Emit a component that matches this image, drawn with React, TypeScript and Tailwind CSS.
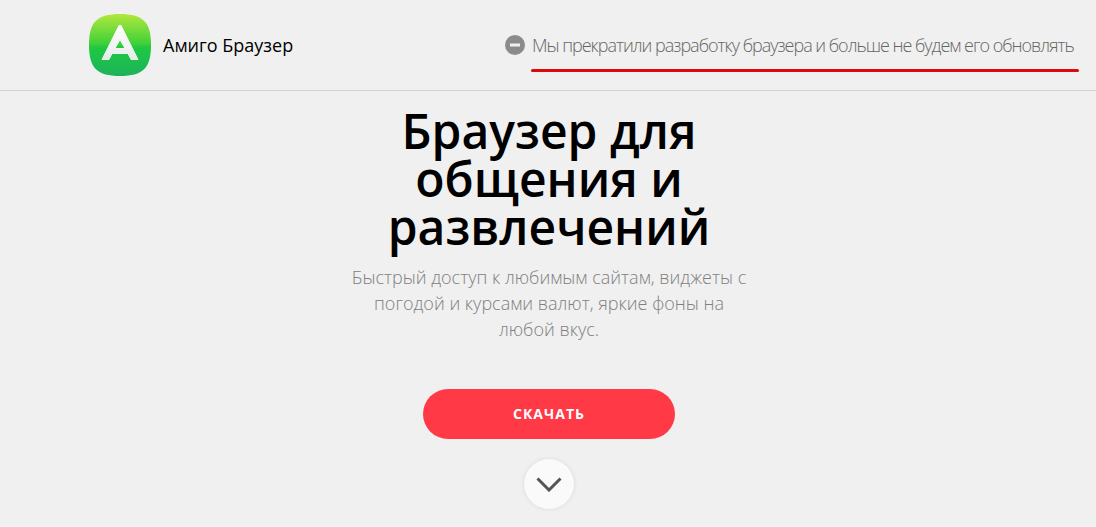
const font = "font-['Open_Sans','Noto_Sans',sans-serif]";

function Logo() {
  return (
    <svg className="h-[62px] w-[62px]" viewBox="0 0 62 62" fill="none">
      <defs>
        <linearGradient id="logo" x1="31" y1="0" x2="31" y2="62" gradientUnits="userSpaceOnUse">
          <stop stopColor="#b2e83c" />
          <stop offset=".48" stopColor="#3fd03a" />
          <stop offset=".54" stopColor="#1fc840" />
          <stop offset="1" stopColor="#1cb35c" />
        </linearGradient>
        <linearGradient id="letter" x1="31" y1="11" x2="31" y2="46" gradientUnits="userSpaceOnUse">
          <stop stopColor="#fff" />
          <stop offset="1" stopColor="#e6ece9" />
        </linearGradient>
      </defs>
      <path d="M31 0C54 0 62 8 62 31S54 62 31 62 0 54 0 31 8 0 31 0Z" fill="url(#logo)" />
      <path
        d="M30 11.500h2L49 45.500h-7l-3-6H23l-3 6h-7ZM31 25.500l-5 9h10Z"
        fill="url(#letter)"
        fillRule="evenodd"
        stroke="url(#letter)"
        strokeLinejoin="round"
      />
    </svg>
  );
}

function Header() {
  return (
    <header className="flex h-[91px] items-center border-b border-[#d2d2d2] pl-[89px] pr-[17px]">
      <Logo />
      <span className="ml-3 text-[18px] text-black">Амиго Браузер</span>
      <div className="relative ml-auto flex items-center">
        <svg className="mr-[7px] h-5 w-5" viewBox="0 0 20 20">
          <circle cx="10" cy="10" r="10" fill="#8b8b8b" />
          <path d="M5 10h10" stroke="#f0f0f0" strokeWidth="3" />
        </svg>
        <p className="w-[547px] whitespace-nowrap text-[18px] font-light tracking-[-1.015px] text-[#666]">
          Мы прекратили разработку браузера и больше не будем его обновлять
        </p>
        <span className="absolute right-0 top-[37px] h-[3px] w-[548px] rounded-full bg-[#dc0a0d]" />
      </div>
    </header>
  );
}

export default function App() {
  return (
    <div className={`h-[527px] overflow-hidden bg-[#f0f0f0] ${font}`}>
      <Header />
      <main className="flex flex-col items-center pl-[2px] text-center">
        <h1 className="mt-4 text-[48px] font-semibold leading-[48px] text-black">
          Браузер для<br />общения и<br />развлечений
        </h1>
        <p className="mt-[13px] text-[18px] font-light leading-[26px] text-[#808080]">
          Быстрый доступ к любимым сайтам, виджеты с<br />погодой и курсами валют, яркие фоны на<br />любой вкус.
        </p>
        <button className="mt-[47px] h-[50px] w-[252px] rounded-full bg-[#ff3946] pb-[2px] text-[14px] font-bold tracking-[1px] text-white">
          СКАЧАТЬ
        </button>
        <button className="mt-5 grid h-[50px] w-[50px] place-items-center rounded-full bg-[#fafafa] shadow-[0_0_4px_rgba(0,0,0,0.1)]">
          <svg className="h-[15px] w-[26px]" viewBox="0 0 26 15" fill="none">
            <path d="M1.500 1.500 13 13 24.500 1.500" stroke="#555" strokeWidth="3" />
          </svg>
        </button>
      </main>
    </div>
  );
}
